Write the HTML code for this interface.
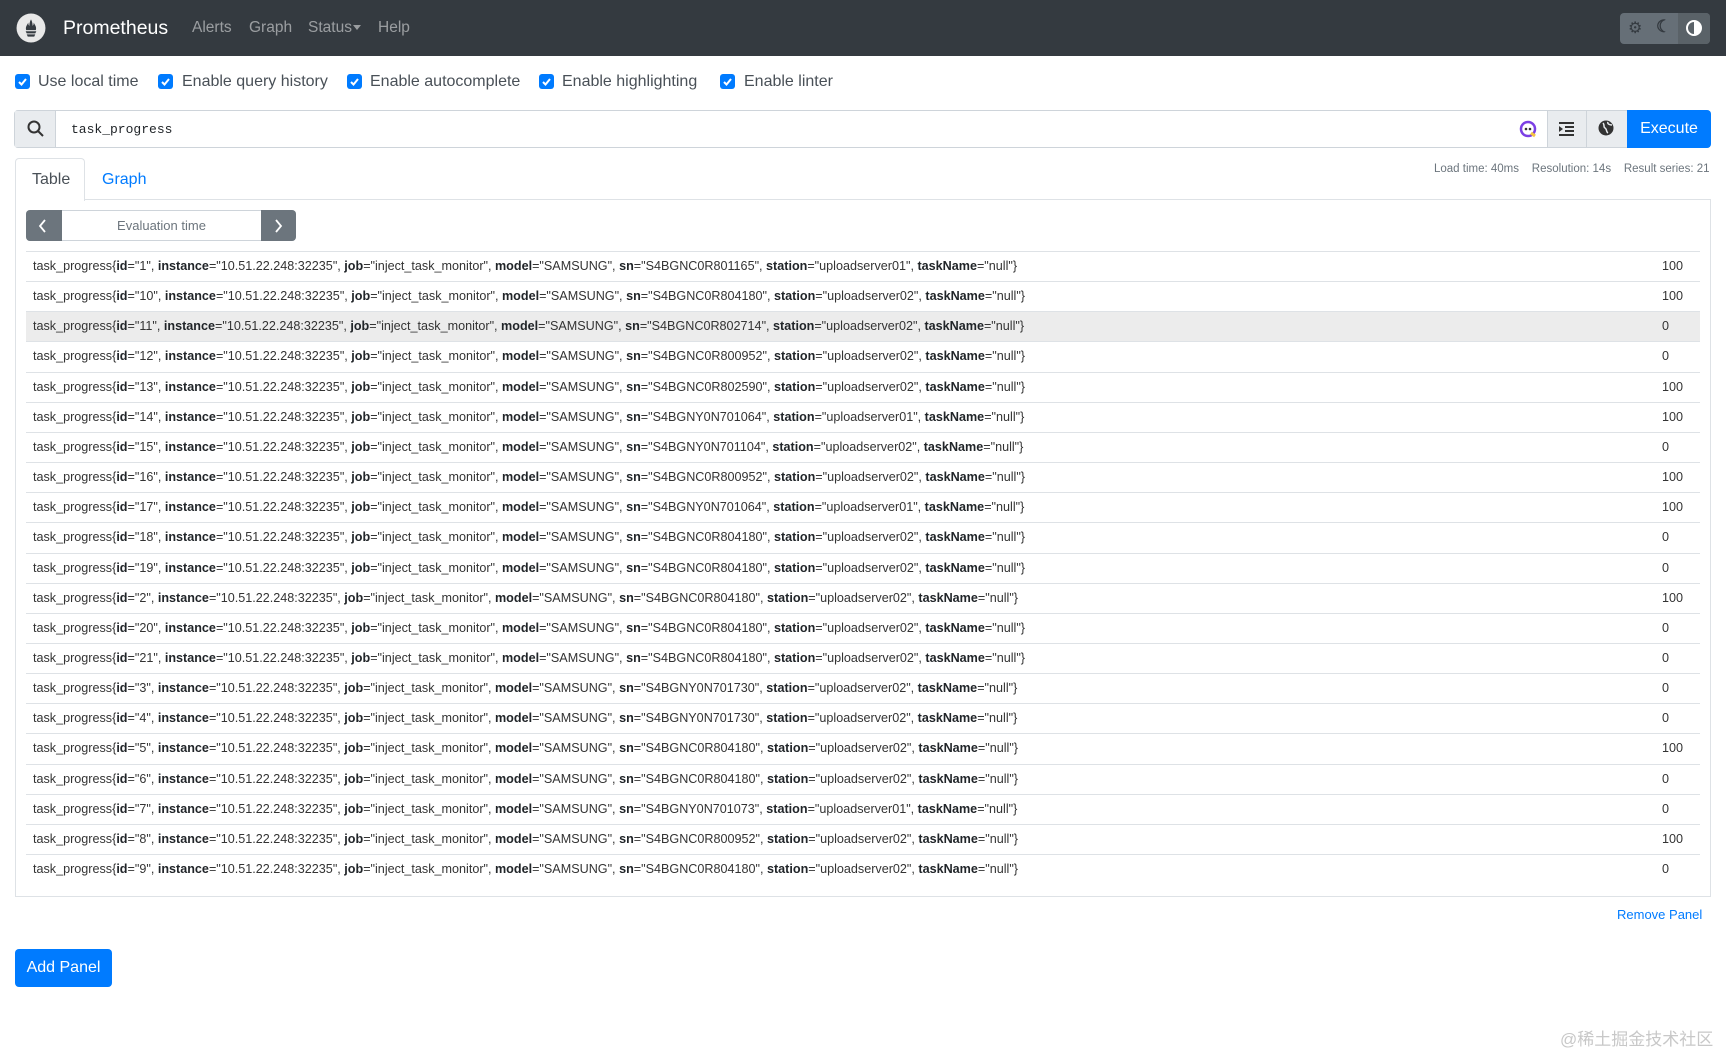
<!DOCTYPE html>
<html><head><meta charset="utf-8">
<style>
*{box-sizing:border-box;margin:0;padding:0}
body{width:1726px;height:1055px;position:relative;background:#fff;font-family:"Liberation Sans",sans-serif;color:#212529;overflow:hidden}
.abs{position:absolute}
.nav{left:0;top:0;width:1726px;height:56px;background:#343a40}
.navlink{color:rgba(255,255,255,.5);font-size:15.5px;top:19px}
.cb{width:15px;height:15px;background:#007bff;border-radius:3px;top:74px}
.cb svg{position:absolute;left:2px;top:2px}
.lbl{font-size:16px;color:#495057;top:73px;white-space:nowrap}
.row{left:26px;width:1674px;height:30.15px;border-top:1px solid #dee2e6;font-size:12.6px;line-height:28px;white-space:nowrap;color:#333}
.row .t{position:absolute;left:7px}
.row .v{position:absolute;left:1636px}
.row b{font-weight:bold;color:#212529}
</style></head><body>
<div class="abs nav"></div>
<svg class="abs" style="left:16px;top:13px" width="30" height="30" viewBox="0 0 28 28"><circle cx="14" cy="14" r="13.5" fill="#e8e8e8"/><path d="M9 17h10l-1 2H10zM10 20h8l-1 2h-6zM9.5 16c-1-3 1-5 2-7 0 2 .5 2.5 1 3 0-3 1-5 1.5-6 .5 1 1.5 3 1.5 6 .5-.5 1-1 1-3 1 2 3 4 2 7z" fill="#343a40"/></svg>
<div class="abs" style="left:63px;top:17px;color:#fff;font-size:19.5px">Prometheus</div>
<div class="abs navlink" style="left:192px">Alerts</div>
<div class="abs navlink" style="left:249px">Graph</div>
<div class="abs navlink" style="left:308px">Status</div>
<div class="abs" style="left:353px;top:25px;width:0;height:0;border-left:4px solid transparent;border-right:4px solid transparent;border-top:5px solid rgba(255,255,255,.5)"></div>
<div class="abs navlink" style="left:378px">Help</div>
<div class="abs" style="left:1620px;top:13px;width:90px;height:31px;background:#6c757d;border-radius:4px;opacity:.9"></div>
<div class="abs" style="left:1678px;top:13px;width:32px;height:31px;background:#5a6268;border-radius:0 4px 4px 0"></div>
<div class="abs" style="left:1628px;top:18px;color:#343a40;font-size:16px">⚙</div>
<div class="abs" style="left:1656px;top:17px;color:#343a40;font-size:17px;font-weight:bold">☾</div>
<svg class="abs" style="left:1686px;top:20px" width="16" height="16"><circle cx="8" cy="8" r="7" fill="none" stroke="#fff" stroke-width="2"/><path d="M8 1a7 7 0 0 1 0 14z" fill="#fff"/></svg>

<div class="abs cb" style="left:15px"><svg width="11" height="11"><path d="M2 6l2.5 2.5L9 3" stroke="#fff" stroke-width="2" fill="none"/></svg></div>
<div class="abs lbl" style="left:38px">Use local time</div>
<div class="abs cb" style="left:158px"><svg width="11" height="11"><path d="M2 6l2.5 2.5L9 3" stroke="#fff" stroke-width="2" fill="none"/></svg></div>
<div class="abs lbl" style="left:182px">Enable query history</div>
<div class="abs cb" style="left:347px"><svg width="11" height="11"><path d="M2 6l2.5 2.5L9 3" stroke="#fff" stroke-width="2" fill="none"/></svg></div>
<div class="abs lbl" style="left:370px">Enable autocomplete</div>
<div class="abs cb" style="left:539px"><svg width="11" height="11"><path d="M2 6l2.5 2.5L9 3" stroke="#fff" stroke-width="2" fill="none"/></svg></div>
<div class="abs lbl" style="left:562px">Enable highlighting</div>
<div class="abs cb" style="left:720px"><svg width="11" height="11"><path d="M2 6l2.5 2.5L9 3" stroke="#fff" stroke-width="2" fill="none"/></svg></div>
<div class="abs lbl" style="left:744px">Enable linter</div>

<div class="abs" style="left:14px;top:110px;width:1697px;height:38px;border:1px solid #ced4da;border-radius:4px"></div>
<div class="abs" style="left:15px;top:111px;width:41px;height:36px;background:#e9ecef;border-right:1px solid #ced4da"></div>
<svg class="abs" style="left:27px;top:120px" width="17" height="17"><circle cx="7" cy="7" r="5.5" fill="none" stroke="#333" stroke-width="2"/><path d="M11 11l5 5" stroke="#333" stroke-width="2"/></svg>
<div class="abs" style="left:71px;top:122px;font-family:'Liberation Mono',monospace;font-size:13px">task_progress</div>
<svg class="abs" style="left:1519px;top:120px" width="18" height="18"><circle cx="9" cy="9" r="7" fill="none" stroke="#7b3fe4" stroke-width="2.5"/><circle cx="7" cy="9" r="1.3" fill="#333"/><circle cx="11" cy="9" r="1.3" fill="#333"/><path d="M12 13l4 3" stroke="#f5c542" stroke-width="3"/></svg>
<div class="abs" style="left:1547px;top:111px;width:80px;height:36px;background:#e9ecef;border-left:1px solid #ced4da"></div>
<div class="abs" style="left:1586px;top:111px;width:1px;height:36px;background:#ced4da"></div>
<svg class="abs" style="left:1559px;top:122px" width="15" height="14"><path d="M0 1h15M6 5h9M6 9h9M0 13h15" stroke="#333" stroke-width="2"/><path d="M0 4l4 3-4 3z" fill="#333"/></svg>
<svg class="abs" style="left:1598px;top:120px" width="16" height="16"><circle cx="8" cy="8" r="7.5" fill="#333"/><path d="M5 3c2 2 0 4 2 5s1 4 3 5M10 2c-1 2 2 3 4 3" stroke="#e9ecef" stroke-width="1.5" fill="none"/></svg>
<div class="abs" style="left:1627px;top:110px;width:84px;height:38px;background:#007bff;border-radius:0 4px 4px 0;color:#fff;font-size:16px;text-align:center;line-height:38px">Execute</div>

<div class="abs" style="left:1434px;top:163px;font-size:11.5px;color:#6c757d;white-space:nowrap">Load time: 40ms &nbsp;&nbsp; Resolution: 14s &nbsp;&nbsp; Result series: 21</div>

<div class="abs" style="left:15px;top:199px;width:1696px;height:698px;border:1px solid #dee2e6"></div>
<div class="abs" style="left:15px;top:158px;width:70px;height:43px;background:#fff;border:1px solid #dee2e6;border-bottom:none;border-radius:4px 4px 0 0"></div>
<div class="abs" style="left:32px;top:171px;font-size:16px;color:#495057">Table</div>
<div class="abs" style="left:102px;top:171px;font-size:16px;color:#007bff">Graph</div>

<div class="abs" style="left:26px;top:210px;width:270px;height:31px;border:1px solid #ced4da;border-radius:4px"></div>
<div class="abs" style="left:26px;top:210px;width:36px;height:31px;background:#6c757d;border-radius:4px 0 0 4px"></div>
<svg class="abs" style="left:38px;top:219px" width="10" height="14"><path d="M7 1L2 7l5 6" stroke="#fff" stroke-width="1.8" fill="none"/></svg>
<div class="abs" style="left:261px;top:210px;width:35px;height:31px;background:#6c757d;border-radius:0 4px 4px 0"></div>
<svg class="abs" style="left:274px;top:219px" width="10" height="14"><path d="M2 1l5 6-5 6" stroke="#fff" stroke-width="1.8" fill="none"/></svg>
<div class="abs" style="left:62px;top:218px;width:199px;text-align:center;font-size:13px;color:#6c757d">Evaluation time</div>

<div id="rows"></div>
<script>
var d=[["1","S4BGNC0R801165","01","100"],["10","S4BGNC0R804180","02","100"],["11","S4BGNC0R802714","02","0"],["12","S4BGNC0R800952","02","0"],["13","S4BGNC0R802590","02","100"],["14","S4BGNY0N701064","01","100"],["15","S4BGNY0N701104","02","0"],["16","S4BGNC0R800952","02","100"],["17","S4BGNY0N701064","01","100"],["18","S4BGNC0R804180","02","0"],["19","S4BGNC0R804180","02","0"],["2","S4BGNC0R804180","02","100"],["20","S4BGNC0R804180","02","0"],["21","S4BGNC0R804180","02","0"],["3","S4BGNY0N701730","02","0"],["4","S4BGNY0N701730","02","0"],["5","S4BGNC0R804180","02","100"],["6","S4BGNC0R804180","02","0"],["7","S4BGNY0N701073","01","0"],["8","S4BGNC0R800952","02","100"],["9","S4BGNC0R804180","02","0"]];
var h="";
d.forEach(function(r,i){
var top=251+i*30.15;
h+='<div class="abs row" style="top:'+top+'px;'+(i==2?'background:#ececec':'')+'"><span class="t">task_progress{<b>id</b>="'+r[0]+'", <b>instance</b>="10.51.22.248:32235", <b>job</b>="inject_task_monitor", <b>model</b>="SAMSUNG", <b>sn</b>="'+r[1]+'", <b>station</b>="uploadserver'+r[2]+'", <b>taskName</b>="null"}</span><span class="v">'+r[3]+'</span></div>';
});
document.getElementById("rows").innerHTML=h;
</script>

<div class="abs" style="left:1617px;top:907px;font-size:13px;color:#007bff">Remove Panel</div>
<div class="abs" style="left:15px;top:949px;width:97px;height:38px;background:#007bff;border-radius:4px;color:#fff;font-size:16px;text-align:center;line-height:38px">Add Panel</div>
<div class="abs" style="left:1560px;top:1025px;font-size:17px;color:#c8c8c8;font-family:'Liberation Sans','Noto Sans CJK SC',sans-serif;white-space:nowrap">@稀土掘金技术社区</div>
</body></html>
